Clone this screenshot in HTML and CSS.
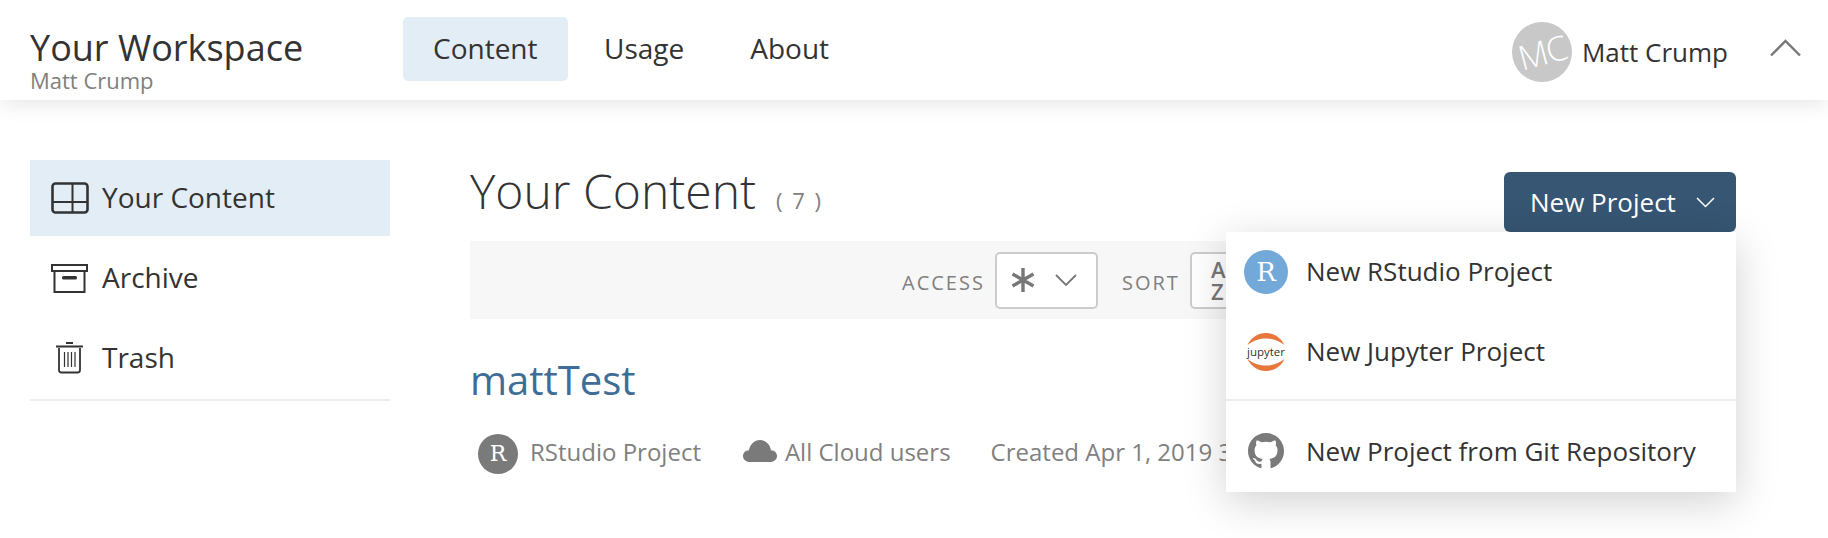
FILE: index.html
```html
<!DOCTYPE html>
<html lang="en">
<head>
<meta charset="utf-8">
<title>Your Workspace</title>
<link rel="stylesheet" href="styles.css">
</head>
<body>
<header class="topbar">
  <div class="brand">
    <div class="brand-title">Your Workspace</div>
    <div class="brand-sub">Matt Crump</div>
  </div>
  <nav class="tabs">
    <a class="tab tab-active">Content</a>
    <a class="tab">Usage</a>
    <a class="tab">About</a>
  </nav>
  <div class="user">
    <div class="avatar"><span class="avatar-text">MC</span></div>
    <span class="user-name">Matt Crump</span>
    <svg class="user-chevron" width="33" height="18" viewBox="0 0 33 18"><path d="M2 16.500 16.500 2 31 16.500" fill="none" stroke="#777" stroke-width="2.400"/></svg>
  </div>
</header>
<div class="page">
  <aside class="side">
    <a class="side-item side-active">
      <svg class="side-icon" width="38" height="32" viewBox="0 0 38 32"><rect x="1.500" y="1.500" width="35" height="29" rx="3" fill="none" stroke="#333" stroke-width="2.600"/><path d="M1.500 20H36.500M21.500 1.500V30.500" stroke="#333" stroke-width="2" fill="none"/></svg>
      <span class="side-label">Your Content</span>
    </a>
    <a class="side-item">
      <svg class="side-icon" width="38" height="30" viewBox="0 0 38 30"><rect x="1" y="2" width="35" height="6" fill="none" stroke="#333" stroke-width="2"/><path d="M3.500 8V29H33.500V8" fill="none" stroke="#333" stroke-width="2"/><rect x="11" y="13" width="15" height="3.500" rx="1.500" fill="#333"/></svg>
      <span class="side-label">Archive</span>
    </a>
    <a class="side-item">
      <svg class="side-icon" width="38" height="32" viewBox="0 0 38 32"><path d="M5 4.500H32M15 1H22" stroke="#333" stroke-width="1.800" fill="none"/><path d="M8 6V28Q8 30.500 10.500 30.500H26.500Q29 30.500 29 28V6" stroke="#333" stroke-width="1.800" fill="none"/><path d="M13.500 10V25M17 10V25M20.500 10V25M24 10V25" stroke="#333" stroke-width="1.200" fill="none"/></svg>
      <span class="side-label">Trash</span>
    </a>
  </aside>
  <main class="main">
    <div class="head">
      <h1 class="head-title">Your Content<span class="head-count">( 7 )</span></h1>
      <div class="new-wrap">
        <button class="new-btn">New Project
          <svg class="new-chevron" width="19" height="11" viewBox="0 0 19 11"><path d="M1 1 9.500 9.500 18 1" fill="none" stroke="#fff" stroke-width="1.500"/></svg>
        </button>
        <div class="menu">
          <div class="menu-group">
            <a class="menu-item">
              <span class="menu-icon"><span class="r-badge r-blue">R</span></span>
              <span class="menu-label">New RStudio Project</span>
            </a>
            <a class="menu-item">
              <span class="menu-icon">
                <svg width="44" height="44" viewBox="0 0 44 44">
                  <path d="M3.500 15C7 7.500 14 3 22 3S37 7.500 40.500 15C34 10 28 8.500 22 8.500S10 10 3.500 15Z" fill="#e8773c"/>
                  <path d="M3.500 29C7 36.500 14 41 22 41S37 36.500 40.500 29C34 34 28 35.500 22 35.500S10 34 3.500 29Z" fill="#e8773c"/>
                  <text x="22" y="26" class="jup-text" text-anchor="middle">jupyter</text>
                </svg>
              </span>
              <span class="menu-label">New Jupyter Project</span>
            </a>
          </div>
          <a class="menu-item menu-git">
            <span class="menu-icon">
              <svg width="36" height="36" viewBox="0 0 16 16"><path fill="#7a7a7a" d="M8 0C3.580 0 0 3.580 0 8c0 3.540 2.290 6.530 5.470 7.590.4.070.55-.17.55-.38 0-.19-.01-.82-.01-1.490-2.010.37-2.530-.49-2.690-.94-.09-.23-.48-.94-.82-1.130-.28-.15-.68-.52-.01-.53.630-.01 1.080.58 1.230.82.720 1.210 1.870.87 2.330.66.070-.52.280-.87.510-1.070-1.780-.2-3.640-.89-3.640-3.950 0-.87.310-1.590.820-2.150-.08-.2-.36-1.020.08-2.120 0 0 .67-.21 2.200.82.640-.18 1.320-.27 2-.27s1.360.09 2 .27c1.530-1.040 2.200-.82 2.200-.82.440 1.100.16 1.920.08 2.120.51.560.82 1.270.82 2.150 0 3.070-1.870 3.750-3.650 3.950.29.250.54.730.54 1.480 0 1.070-.01 1.930-.01 2.200 0 .21.150.46.550.38A8.010 8.010 0 0 0 16 8c0-4.420-3.580-8-8-8z"/></svg>
            </span>
            <span>New Project from Git Repository</span>
          </a>
        </div>
      </div>
    </div>
    <div class="filters">
      <span class="filter-label">ACCESS</span>
      <div class="filter-box filter-access">
        <svg width="26" height="26" viewBox="0 0 26 26"><path d="M13 1V25M2.500 7 23.500 19M23.500 7 2.500 19" stroke="#777" stroke-width="3.400" fill="none"/></svg>
        <svg width="22" height="12" viewBox="0 0 22 12"><path d="M1 1 11 11 21 1" stroke="#777" stroke-width="1.800" fill="none"/></svg>
      </div>
      <span class="filter-label filter-sort">SORT</span>
      <div class="filter-box filter-az"><span>A</span><span>Z</span></div>
    </div>
    <div class="project">
      <a class="project-name">mattTest</a>
      <div class="project-meta">
        <span class="r-badge r-gray">R</span>
        <span class="meta-type">RStudio Project</span>
        <svg class="meta-cloud" width="34" height="22" viewBox="0 0 34 22"><path fill="#7a7a7a" d="M7 22C3 22 0 19.500 0 16S2.700 10.300 6 10.200C6.800 4.400 11.500 0 17 0S27.200 4.400 28 10.200C31.300 10.300 34 12.500 34 16S31 22 27 22Z"/></svg>
        <span class="meta-access">All Cloud users</span>
        <span class="meta-created">Created Apr 1, 2019 3:12 PM by Matt Crump</span>
      </div>
    </div>
  </main>
</div>
</body>
</html>
```
FILE: styles.css
```css
* { box-sizing: border-box; }
html, body { margin: 0; height: 100%; overflow: hidden; background: #fff; }
body { font-family: "Open Sans", sans-serif; color: #333; }
a { color: inherit; text-decoration: none; }

.topbar {
  height: 100px;
  display: flex;
  align-items: flex-start;
  padding: 0 26px 0 30px;
  background: #fff;
  box-shadow: 0 2px 22px rgba(0, 0, 0, .12);
  position: relative;
}
.brand { width: 373px; padding-top: 27px; }
.brand-title { font-size: 36px; line-height: 42px; color: #333; }
.brand-sub { font-size: 22px; line-height: 22px; color: #808080; }
.tabs { display: flex; gap: 0; padding-top: 17px; }
.tab { height: 64px; padding: 0 30px 2px; display: flex; align-items: center; font-size: 28px; border-radius: 5px; }
.tab-active { background: #e3edf6; width: 165px; }
.tab + .tab { padding: 0 30px 2px 36px; }
.user { margin-left: auto; display: flex; align-items: center; padding-top: 22px; }
.avatar { width: 60px; height: 60px; border-radius: 50%; background: #c8c8c8; display: flex; align-items: center; justify-content: center; overflow: hidden; }
.avatar-text { color: #fff; font-size: 34px; font-weight: 300; transform: rotate(-15deg); letter-spacing: -1px; }
.user-name { font-size: 26px; margin-left: 10px; }
.user-chevron { margin-left: 41px; margin-top: -8px; }

.page { display: flex; padding: 60px 92px 0 30px; }
.side { width: 360px; border-bottom: 2px solid #eee; height: 241px; flex: none; }
.side-item { height: 80px; display: flex; align-items: center; font-size: 28px; padding-left: 21px; gap: 13px; }
.side-active { height: 76px; background: #e3edf6; margin-bottom: 2px; }
.side-icon { flex: none; }
.side-label { padding-bottom: 2px; }

.main { flex: 1; margin-left: 80px; min-width: 0; }
.head { display: flex; justify-content: space-between; height: 82px; align-items: flex-start; }
.head-title { margin: 1px 0 0; font-size: 48px; font-weight: 300; line-height: 60px; color: #333; }
.head-count { font-size: 22px; color: #808080; margin-left: 20px; letter-spacing: 2px; font-weight: 400; }
.new-wrap { position: relative; margin-top: 12px; }
.new-btn { width: 232px; height: 60px; background: #365673; color: #fff; border: 0; border-radius: 6px; font: 400 26px "Open Sans", sans-serif; display: flex; align-items: center; padding: 0 0 0 26px; white-space: nowrap; }
.new-chevron { margin-left: 20px; }

.menu { position: absolute; top: 60px; right: 0; width: 510px; height: 260px; background: #fff; box-shadow: 0 10px 40px rgba(0, 0, 0, .18); font-size: 26px; color: #333; }
.menu-group { height: 169px; border-bottom: 2px solid #eee; padding-top: 0; }
.menu-item { height: 80px; display: flex; align-items: center; white-space: nowrap; padding-left: 18px; }
.menu-git { height: 89px; padding-top: 11px; }
.menu-icon { width: 44px; height: 44px; flex: none; margin-right: 18px; display: flex; align-items: center; justify-content: center; }
.menu-label { padding-bottom: 2px; }
.jup-text { font: 400 11.500px "Open Sans", sans-serif; fill: #333; }

.r-badge { border-radius: 50%; color: #fff; display: flex; align-items: center; justify-content: center; font-family: "DejaVu Serif", "Liberation Serif", serif; flex: none; }
.r-blue { width: 44px; height: 44px; background: #72a9d9; font-size: 26px; }
.r-gray { width: 40px; height: 40px; background: #7a7a7a; font-size: 22px; margin: 5px 0 0 8px; }

.filters { height: 78px; margin-top: -1px; background: #f7f7f7; display: flex; align-items: center; padding-left: 432px; color: #808080; }
.filter-label { font-size: 20px; letter-spacing: 2px; width: 93px; white-space: nowrap; padding-top: 4px; }
.filter-sort { width: 68px; margin-left: 24px; }
.filter-box { height: 57px; border: 2px solid #ccc; border-radius: 5px; background: #fff; flex: none; display: flex; align-items: center; }
.filter-access { width: 103px; padding: 0 19px 0 13px; justify-content: space-between; }
.filter-az { width: 70px; flex-direction: column; align-items: flex-start; justify-content: center; padding-left: 19px; font-size: 22px; line-height: 22px; font-weight: 600; color: #777; }

.project { padding-top: 34px; }
.project-name { display: block; font-size: 40px; line-height: 54px; color: #3f6d96; }
.project-meta { display: flex; align-items: center; font-size: 24px; color: #808080; white-space: nowrap; margin-top: 24px; height: 40px; }
.meta-type { margin-left: 12px; }
.meta-cloud { margin-left: 42px; flex: none; }
.meta-access { margin-left: 8px; }
.meta-created { margin-left: 40px; }
```
